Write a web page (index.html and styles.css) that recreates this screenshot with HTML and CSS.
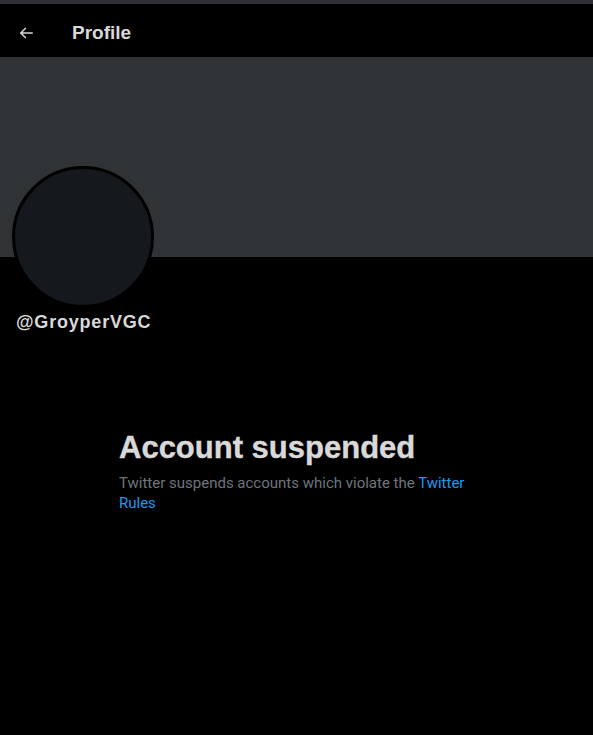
FILE: index.html
```html
<!DOCTYPE html>
<html>
<head>
<meta charset="utf-8">
<link rel="stylesheet" href="styles.css">
</head>
<body>
<div class="topline"></div>
<header class="header">
  <svg class="back" viewBox="0 0 24 24" width="18" height="18"><path d="M7.414 13l5.043 5.04-1.414 1.42L3.586 12l7.457-7.46 1.414 1.42L7.414 11H21v2H7.414z" fill="#d9d9d9"/></svg>
  <h1 class="title">Profile</h1>
</header>
<div class="banner"></div>
<div class="profile">
  <div class="avatar"></div>
  <div class="handle">@GroyperVGC</div>
</div>
<section class="notice">
  <h2 class="notice-title">Account suspended</h2>
  <p class="notice-text">Twitter suspends accounts which violate the <a class="link" href="#">Twitter Rules</a></p>
</section>
</body>
</html>
```
FILE: styles.css
```css
html, body {
  margin: 0;
  padding: 0;
  background: #000;
  color: #d9d9d9;
  font-family: "Liberation Sans", Arial, sans-serif;
}
.topline {
  height: 4px;
  background: #2f3034;
}
.header {
  box-sizing: border-box;
  height: 53px;
  padding: 4px 0 0 17px;
  display: flex;
  align-items: center;
}
.back {
  display: block;
}
.title {
  margin: 0 0 0 37px;
  font-size: 19px;
  font-weight: 700;
  color: #d9d9d9;
}
.banner {
  height: 200px;
  background: #2f3336;
}
.profile {
  padding-left: 12px;
  margin-top: -91px;
}
.avatar {
  width: 136px;
  height: 136px;
  border-radius: 50%;
  background: #15181c;
  border: 3px solid #000;
}
.handle {
  margin: 4px 0 0 4px;
  font-size: 18px;
  font-weight: 700;
  letter-spacing: 0.8px;
  color: #d9d9d9;
}
.notice {
  margin: 97px 0 0 119px;
  width: 360px;
}
.notice-title {
  margin: 0;
  font-size: 31px;
  font-weight: 700;
  line-height: 36px;
  color: #d9d9d9;
  -webkit-text-stroke: 0.4px #d9d9d9;
}
.notice-text {
  margin: 7px 0 0;
  font-family: Roboto, sans-serif;
  font-size: 15px;
  line-height: 20px;
  color: #6e767d;
}
.link {
  color: #1d9bf0;
  text-decoration: none;
}
```
